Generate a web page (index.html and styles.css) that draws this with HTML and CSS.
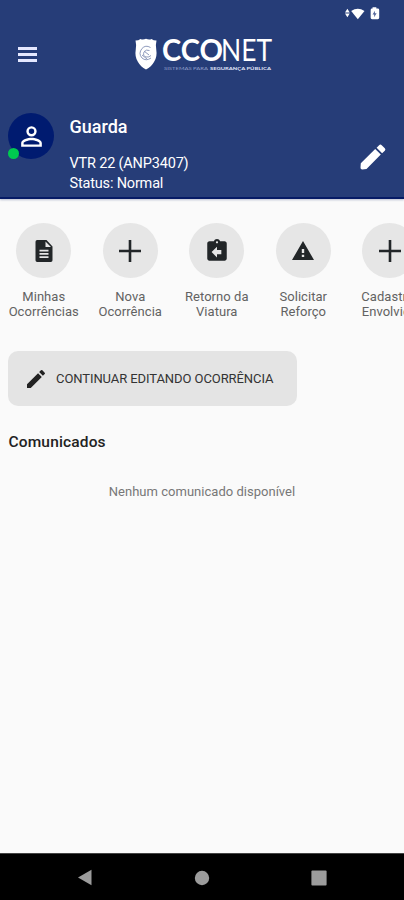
FILE: index.html
```html
<!DOCTYPE html>
<html lang="pt-BR">
<head>
<meta charset="utf-8">
<meta name="viewport" content="width=device-width, initial-scale=1">
<title>CCONET</title>
<link rel="stylesheet" href="styles.css">
</head>
<body>
<div class="app">
  <header class="header">
    <div class="status-bar">
      <svg width="40" height="16" viewBox="0 0 40 16" fill="#fff">
        <path d="M2.500 2.500 5 6.500H0zM2.500 11.500 5 7.500H0z"/>
        <path d="M6.500 4.800Q13.500 0.200 20.500 4.800L13.500 13.500z"/>
        <path d="M29 2.200V1h4v1.200h1.500q1.500 0 1.500 1.500v8.300q0 1.500-1.500 1.500h-6q-1.500 0-1.500-1.500V3.700q0-1.500 1.500-1.500z"/>
        <path d="M31.500 4.500 29 8.400h1.700V11.500L33.300 7.300h-1.800z" fill="#53659a"/>
      </svg>
    </div>
    <div class="toolbar">
      <button class="menu" aria-label="Menu"><i></i><i></i><i></i></button>
      <svg class="logo" width="140" height="36" viewBox="0 0 140 36">
        <path d="M2.500 5.500q3 0 5-1.500 2.500 1.200 5.500-.3 3 1.500 5.500.3 2 1.500 5 1.500-1 4-.3 8.500 1.300 8-2.200 13-2.500 4.500-8 7.500-5.500-3-8-7.500-3.500-5-2.200-13 .7-4.500-.3-8.500z" fill="#fff"/>
        <path d="M17.500 12.500q-5-3-8.500 1-4 5 0 9.500 4 3.500 9 0M16.500 15.500q-3.500-1.500-5.500 1.500-1.500 4 2 5 3 .5 5-1.500M11 16l5 4M9 20l5 4" fill="none" stroke="#8f9bbd" stroke-width="1"/>
        <text class="logo-bold" x="29" y="26" textLength="61" lengthAdjust="spacingAndGlyphs">CCO</text>
        <text class="logo-thin" x="88" y="26" textLength="51" lengthAdjust="spacingAndGlyphs">NET</text>
        <text class="tag" x="31" y="34.500" textLength="44" lengthAdjust="spacingAndGlyphs">SISTEMAS PARA</text>
        <text class="tag tag-bold" x="77" y="34.500" textLength="61" lengthAdjust="spacingAndGlyphs">SEGURANÇA PÚBLICA</text>
      </svg>
    </div>
    <div class="profile">
      <div class="avatar">
        <svg width="31" height="31" viewBox="0 0 24 24" fill="#fff"><path d="M12 5.900a2.100 2.100 0 1 1 0 4.200 2.100 2.100 0 0 1 0-4.200m0 9c2.970 0 6.100 1.460 6.100 2.100v1.100H5.900V17c0-.64 3.130-2.100 6.100-2.100M12 4a4 4 0 1 0 0 8 4 4 0 0 0 0-8m0 9c-2.670 0-8 1.340-8 4v3h16v-3c0-2.660-5.330-4-8-4"/></svg>
        <span class="online"></span>
      </div>
      <div class="info">
        <h1>Guarda</h1>
        <p class="unit">VTR 22 (ANP3407)</p>
        <p class="state">Status: Normal</p>
      </div>
      <svg class="edit" width="28" height="28" viewBox="0 0 28 28" fill="#fff"><path d="M1.800 20.200 16.200 6l5.600 5.600L7.500 26 3.300 26.500q-2 0-1.800-2zM17.600 4.800l2.500-2.600q1.300-1.200 2.600 0l3.100 3q1.200 1.300 0 2.600l-2.700 2.500z"/></svg>
    </div>
  </header>

  <main class="content">
    <nav class="actions">
      <a class="action"><span class="disc"><svg width="24" height="24" viewBox="0 0 24 24"><path d="M14.500 1H5.200q-1.700 0-1.700 1.700v18.600Q3.500 23 5.200 23h13.600q1.700 0 1.700-1.700V7.500zM16.500 19h-9v-1.800h9zm0-3.200h-9V14h9zm0-3.200h-9v-1.800h9zM13.500 8V2.500L19 8z"/></svg></span><span>Minhas<br>Ocorrências</span></a>
      <a class="action"><span class="disc"><svg width="24" height="24" viewBox="0 0 24 24"><path d="M10.700 1h2.600v9.700H23v2.600h-9.700V23h-2.600v-9.700H1v-2.600h9.700z"/></svg></span><span>Nova<br>Ocorrência</span></a>
      <a class="action"><span class="disc"><svg width="26" height="26" viewBox="0 0 24 24"><path d="M19 3h-4.180C14.400 1.840 13.300 1 12 1s-2.400.84-2.820 2H5c-1.100 0-2 .9-2 2v14c0 1.100.9 2 2 2h14c1.100 0 2-.9 2-2V5c0-1.100-.9-2-2-2m-7 0c.55 0 1 .45 1 1s-.45 1-1 1-1-.45-1-1 .45-1 1-1m4 12h-4v3l-5-5 5-5v3h4z"/></svg></span><span>Retorno da<br>Viatura</span></a>
      <a class="action"><span class="disc"><svg width="24" height="24" viewBox="0 0 24 24"><path d="M1 21h22L12 2zm12.200-3h-2.400v-2.200h2.400zm0-4h-2.400v-4h2.400z"/></svg></span><span>Solicitar<br>Reforço</span></a>
      <a class="action"><span class="disc"><svg width="24" height="24" viewBox="0 0 24 24"><path d="M10.700 1h2.600v9.700H23v2.600h-9.700V23h-2.600v-9.700H1v-2.600h9.700z"/></svg></span><span>Cadastrar<br>Envolvido</span></a>
    </nav>
    <button class="continue">
      <svg width="24" height="24" viewBox="0 0 24 24" fill="#222"><path d="M3 17.250V21h3.750L17.810 9.940l-3.750-3.750zM20.710 7.040a1 1 0 0 0 0-1.410l-2.340-2.340a1 1 0 0 0-1.410 0l-1.830 1.830 3.750 3.750z"/></svg>
      <span>CONTINUAR EDITANDO OCORRÊNCIA</span>
    </button>
    <h2>Comunicados</h2>
    <p class="empty">Nenhum comunicado disponível</p>
  </main>

  <footer class="system-nav">
    <svg width="16" height="17" viewBox="0 0 16 17"><path d="M1 8.500 14.500.8v15.400z"/></svg>
    <svg width="16" height="16" viewBox="0 0 16 16"><circle cx="8" cy="8" r="7.200"/></svg>
    <svg width="16" height="16" viewBox="0 0 16 16"><rect x=".4" y=".4" width="15.200" height="15.200" rx="1"/></svg>
  </footer>
</div>
</body>
</html>
```
FILE: styles.css
```css
* { box-sizing: border-box; }
body { margin: 0; font-family: Roboto, "Liberation Sans", sans-serif; background: #fafafa; }
h1, h2, p { margin: 0; }
button { border: 0; padding: 0; font: inherit; }
.app { width: 404px; height: 900px; overflow: hidden; display: flex; flex-direction: column; }

.header { height: 199px; flex: none; background: #263d78; color: #fff; border-bottom: 2px solid #061b66; box-shadow: 0 1px 2px #b9bfd0; }
.status-bar { height: 32px; padding: 6px 21px 0 0; display: flex; justify-content: flex-end; }
.status-bar svg { width: 38px; height: 16px; overflow: visible; }
.toolbar { height: 81px; display: flex; align-items: flex-start; }
.menu { width: 19px; margin: 15px 0 0 18px; background: none; display: flex; flex-direction: column; gap: 3px; }
.menu i { height: 3px; background: #e5e8ff; }
.logo { margin: 3px 0 0 96px; overflow: visible; }
.logo text { fill: #fff; }
.logo-bold { font: 700 31px Lato, sans-serif; }
.logo-thin { font: 400 31px Lato, sans-serif; }
.logo .tag { font: 400 4.500px Lato, sans-serif; fill: #8f9ec9; }
.logo .tag-bold { font-weight: 900; fill: #d9def0; }
.profile { display: flex; align-items: flex-start; padding-left: 8px; }
.avatar { position: relative; width: 46px; height: 46px; border-radius: 50%; background: #001b70; display: grid; place-items: center; }
.online { position: absolute; left: 0; bottom: 0; width: 11px; height: 11px; border-radius: 50%; background: #00ca50; }
.info { margin-left: 15.500px; width: 289.500px; }
h1 { font-size: 18px; line-height: 22px; font-weight: 500; margin-top: 3px; }
.unit, .state { font-size: 14.500px; letter-spacing: -.18px; }
.unit { line-height: 20px; margin-top: 16px; }
.state { line-height: 19px; }
.edit { flex: none; margin: 30px 0 0 0; }

.content { flex: 1; }
.actions { display: grid; grid-template-columns: repeat(5, 86.500px); padding: 24px 0 0 .5px; overflow: hidden; }
.action { display: flex; flex-direction: column; align-items: center; text-align: center; font-size: 13px; line-height: 15px; letter-spacing: .05px; color: #626262; }
.disc { width: 55px; height: 55px; border-radius: 50%; background: #e6e6e6; display: grid; place-items: center; margin-bottom: 11px; }
.disc svg { fill: #222628; }
.continue { margin: 32px 0 0 8px; width: 289px; height: 55px; border-radius: 10px; background: #e4e4e4; display: flex; align-items: center; padding-left: 16px; gap: 8px; font-size: 13px; letter-spacing: -.08px; color: #333; white-space: nowrap; }
h2 { font-size: 15.500px; line-height: 20px; font-weight: 500; color: #222; margin: 26px 0 0 8.500px; letter-spacing: .15px; }
.empty { text-align: center; font-size: 13px; line-height: 18px; letter-spacing: .02px; color: #777; margin-top: 31px; }

.system-nav { height: 47px; flex: none; background: #000; border-top: 1px solid #444; display: flex; justify-content: space-between; align-items: center; padding: 1px 77px 0; }
.system-nav svg { fill: #9c9c9c; }
```
